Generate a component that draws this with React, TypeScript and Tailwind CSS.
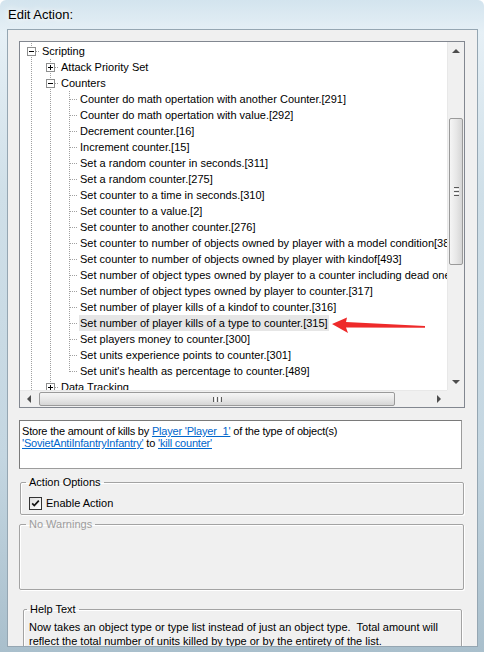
import React from "react";

type Cell = "pipe" | "blank" | "tee" | "ell";
type Row = { cells: Cell[]; box?: "plus" | "minus"; text: string; selected?: boolean };

const L2: Cell[] = ["pipe", "pipe", "tee"];

const rows: Row[] = [
  { cells: ["tee"], box: "minus", text: "Scripting" },
  { cells: ["pipe", "tee"], box: "plus", text: "Attack Priority Set" },
  { cells: ["pipe", "tee"], box: "minus", text: "Counters" },
  { cells: L2, text: "Counter do math opertation with another Counter.[291]" },
  { cells: L2, text: "Counter do math opertation with value.[292]" },
  { cells: L2, text: "Decrement counter.[16]" },
  { cells: L2, text: "Increment counter.[15]" },
  { cells: L2, text: "Set a random counter in seconds.[311]" },
  { cells: L2, text: "Set a random counter.[275]" },
  { cells: L2, text: "Set counter to a time in seconds.[310]" },
  { cells: L2, text: "Set counter to a value.[2]" },
  { cells: L2, text: "Set counter to another counter.[276]" },
  { cells: L2, text: "Set counter to number of objects owned by player with a model condition[38" },
  { cells: L2, text: "Set counter to number of objects owned by player with kindof[493]" },
  { cells: L2, text: "Set number of object types owned by player to a counter including dead one" },
  { cells: L2, text: "Set number of object types owned by player to counter.[317]" },
  { cells: L2, text: "Set number of player kills of a kindof to counter.[316]" },
  { cells: L2, text: "Set number of player kills of a type to counter.[315]", selected: true },
  { cells: L2, text: "Set players money to counter.[300]" },
  { cells: L2, text: "Set units experience points to counter.[301]" },
  { cells: ["pipe", "pipe", "ell"], text: "Set unit's health as percentage to counter.[489]" },
  { cells: ["pipe", "tee"], box: "plus", text: "Data Tracking" },
];

function TreeCell({ kind, box }: { kind: Cell; box?: "plus" | "minus" }) {
  const dot = { stroke: "#a0a0a0", strokeWidth: 1, strokeDasharray: "1 1" };
  return (
    <svg width="19" height="16" viewBox="0 0 19 16" className="block shrink-0" shapeRendering="crispEdges">
      {(kind === "pipe" || kind === "tee") && <line x1="10.5" y1="0" x2="10.5" y2="16" {...dot} />}
      {kind === "ell" && <line x1="10.5" y1="0" x2="10.5" y2="9" {...dot} />}
      {(kind === "tee" || kind === "ell") && <line x1="11" y1="8.5" x2="19" y2="8.5" {...dot} />}
      {box && (
        <>
          <rect x="6.5" y="4.5" width="8" height="8" fill="#ffffff" stroke="#8e8f8f" />
          <line x1="8" y1="8.5" x2="13" y2="8.5" stroke="#000000" />
          {box === "plus" && <line x1="10.5" y1="6" x2="10.5" y2="11" stroke="#000000" />}
        </>
      )}
    </svg>
  );
}

function Arrow({ dir }: { dir: "up" | "down" | "left" | "right" }) {
  const pts: Record<string, string> = {
    up: "5,3 1,7 9,7",
    down: "1,3 9,3 5,7",
    left: "3,5 7,1 7,9",
    right: "3,1 7,5 3,9",
  };
  return (
    <svg width="10" height="10" viewBox="0 0 10 10" className="block">
      <polygon points={pts[dir]} fill="#4d4d4d" />
    </svg>
  );
}

function VScroll() {
  return (
    <div className="flex h-[348px] w-[17px] flex-col border-l border-[#e8e8e8] bg-[#f0f0f0]">
      <div className="flex h-[17px] items-center justify-center">
        <Arrow dir="up" />
      </div>
      <div className="h-[59px]" />
      <div className="mx-[1px] flex h-[147px] items-center justify-center rounded-[2px] border border-[#9a9a9a] bg-gradient-to-r from-[#f5f5f5] via-[#e8e8e8] to-[#d6d6d6]">
        <div className="flex flex-col gap-[1px]">
          <div className="h-[1px] w-[5px] bg-[#5a5a5a]" />
          <div className="h-[1px] w-[5px] bg-[#ffffff]" />
          <div className="h-[1px] w-[5px] bg-[#5a5a5a]" />
          <div className="h-[1px] w-[5px] bg-[#ffffff]" />
          <div className="h-[1px] w-[5px] bg-[#5a5a5a]" />
        </div>
      </div>
      <div className="flex-1" />
      <div className="flex h-[17px] items-center justify-center">
        <Arrow dir="down" />
      </div>
    </div>
  );
}

function HScroll() {
  return (
    <div className="flex h-[17px] w-[427px] border-t border-[#e8e8e8] bg-[#f0f0f0]">
      <div className="flex w-[17px] items-center justify-center">
        <Arrow dir="left" />
      </div>
      <div className="w-[2px]" />
      <div className="my-[1px] flex w-[356px] items-center justify-center rounded-[2px] border border-[#9a9a9a] bg-gradient-to-b from-[#f5f5f5] via-[#e8e8e8] to-[#d6d6d6]">
        <div className="flex gap-[1px]">
          <div className="h-[5px] w-[1px] bg-[#5a5a5a]" />
          <div className="h-[5px] w-[1px] bg-[#ffffff]" />
          <div className="h-[5px] w-[1px] bg-[#5a5a5a]" />
          <div className="h-[5px] w-[1px] bg-[#ffffff]" />
          <div className="h-[5px] w-[1px] bg-[#5a5a5a]" />
        </div>
      </div>
      <div className="flex-1" />
      <div className="flex w-[17px] items-center justify-center">
        <Arrow dir="right" />
      </div>
    </div>
  );
}

const link = "text-[#0066cc] underline";

export default function App() {
  return (
    <div
      className="relative h-[652px] w-[484px] overflow-hidden rounded-t-[6px] bg-[linear-gradient(180deg,#d3e4ee_0%,#e6f0f6_5%,#cfdfe8_30%,#c4d6e1_70%,#a9bfcc_100%)] text-black"
      style={{ fontFamily: '"Liberation Sans", Arial, sans-serif' }}
    >
      {/* title bar */}
      <div className="flex h-[29px] items-center pl-[8px] text-[13px] [text-shadow:0_0_6px_#ffffff,0_0_10px_#ffffff]">
        Edit Action:
      </div>

      {/* client area */}
      <div className="ml-[7px] h-[618px] w-[471px] overflow-hidden border border-[#95a6b2] bg-[#f0f0f0]">
        {/* tree view */}
        <div className="ml-[11px] mt-[11px] h-[367px] w-[446px] border border-[#828790] bg-white">
          <div className="flex">
            <div className="h-[348px] w-[427px] overflow-hidden pl-[1px] pt-[1px] text-[11px]">
              {rows.map((r, i) => (
                <div key={i} className="flex h-[16px] items-start">
                  {r.cells.map((c, j) => (
                    <TreeCell key={j} kind={c} box={j === r.cells.length - 1 ? r.box : undefined} />
                  ))}
                  <span
                    className={
                      "ml-[1px] whitespace-nowrap px-[1px] leading-[16px] " +
                      (r.selected ? "bg-[#e6e6e6]" : "")
                    }
                  >
                    {r.text}
                  </span>
                </div>
              ))}
            </div>
            <VScroll />
          </div>
          <div className="flex">
            <HScroll />
            <div className="h-[17px] w-[17px] bg-[#f0f0f0]" />
          </div>
        </div>

        {/* description */}
        <div className="ml-[11px] mt-[12px] h-[49px] w-[443px] border border-[#9c9c9c] border-l-[#7a7a7a] border-t-[#7a7a7a] bg-white px-[2px] pt-[4px] text-[11px] leading-[12px] tracking-[-0.2px]">
          <div className="whitespace-nowrap">
            Store the amount of kills by <span className={link}>Player 'Player_1'</span> of the type of object(s)
          </div>
          <div className="whitespace-nowrap">
            <span className={link}>'SovietAntiInfantryInfantry'</span> to <span className={link}>'kill counter'</span>
          </div>
        </div>

        {/* Action Options */}
        <fieldset className="ml-[12px] mt-[7px] h-[39px] w-[444px] rounded-[2px] border border-[#a3a3a3] px-0 shadow-[inset_1px_1px_0_#ffffff,1px_1px_0_#ffffff]">
          <legend className="ml-[5px] px-[3px] text-[11px] leading-[13px]">Action Options</legend>
          <div className="flex items-center pl-[8px] pt-[8px]">
            <div className="flex h-[13px] w-[13px] items-center justify-center border border-[#333333] bg-gradient-to-br from-[#dcdcdc] to-white">
              <svg width="11" height="11" viewBox="0 0 11 11">
                <path d="M2.2 5.4 L4.3 7.6 L8.8 2.6" fill="none" stroke="#111111" strokeWidth="1.7" />
              </svg>
            </div>
            <span className="ml-[4px] text-[11px] leading-[13px]">Enable Action</span>
          </div>
        </fieldset>

        {/* No Warnings */}
        <fieldset className="ml-[11px] mt-[3px] h-[72px] w-[445px] rounded-[2px] border border-[#a3a3a3] px-0 shadow-[inset_1px_1px_0_#ffffff,1px_1px_0_#ffffff]">
          <legend className="ml-[6px] px-[3px] text-[11px] leading-[13px] text-[#9d9d9d]">No Warnings</legend>
        </fieldset>

        {/* Help Text */}
        <fieldset className="ml-[15px] mt-[13px] h-[70px] w-[439px] rounded-[2px] border border-[#a3a3a3] px-0 shadow-[inset_1px_1px_0_#ffffff,1px_1px_0_#ffffff]">
          <legend className="ml-[3px] px-[3px] text-[11px] leading-[13px]">Help Text</legend>
          <div className="pl-[5px] pt-[4px] text-[11px] leading-[14px]">
            <div className="whitespace-pre">Now takes an object type or type list instead of just an object type.  Total amount will</div>
            <div className="whitespace-pre">reflect the total number of units killed by type or by the entirety of the list.</div>
          </div>
        </fieldset>
      </div>

      {/* red annotation arrow */}
      <svg className="absolute left-[330px] top-[314px]" width="100" height="22" viewBox="0 0 100 22">
        <polygon points="2,10 17,3.5 16,8 95,12 95,13.8 16,13.5 18,19" fill="#ee2a2a" />
      </svg>
    </div>
  );
}
